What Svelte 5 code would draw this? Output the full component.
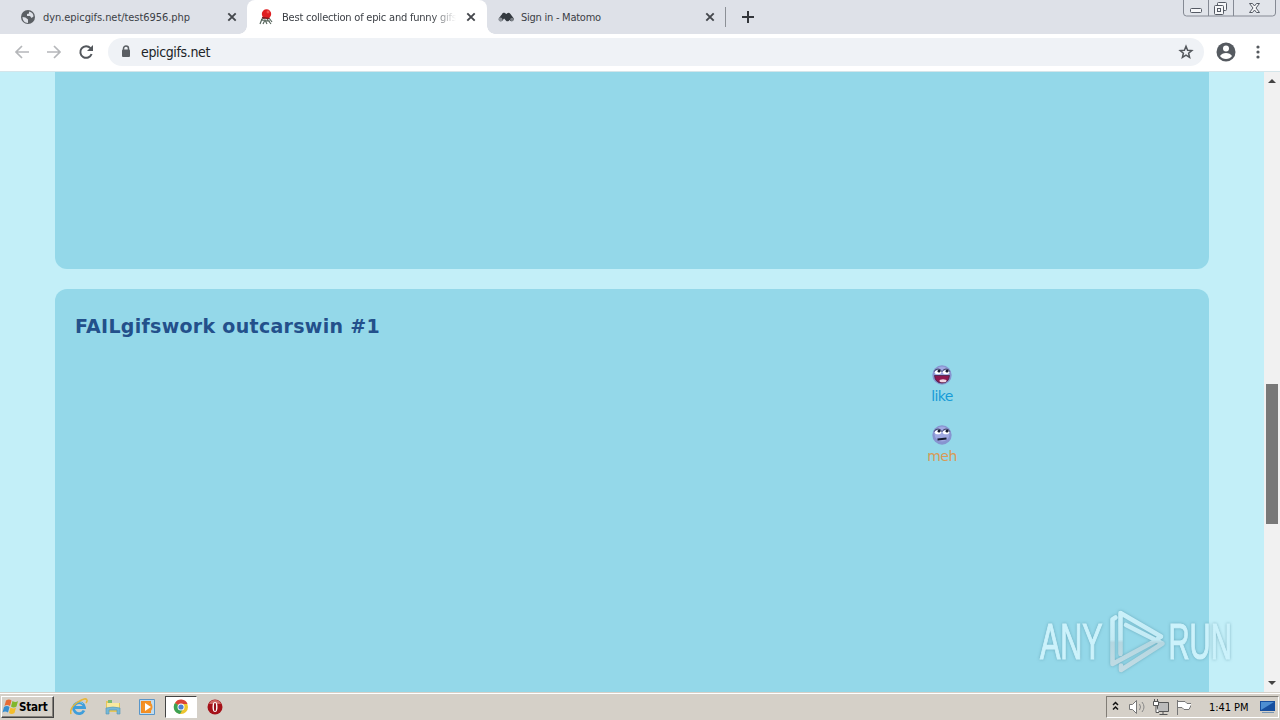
<script>
  const tabs = [
    { title: 'dyn.epicgifs.net/test6956.php', icon: 'globe' },
    { title: 'Best collection of epic and funny gifs', icon: 'epic', active: true },
    { title: 'Sign in - Matomo', icon: 'matomo' },
  ];

  const votes = [
    { label: 'like', mood: 'happy' },
    { label: 'meh', mood: 'meh' },
  ];

  const address = 'epicgifs.net';
  const postTitle = 'FAILgifswork outcarswin #1';
  const clock = '1:41 PM';
</script>

<div class="screen">
  <header class="tabstrip">
    {#each tabs as tab}
      <div class="tab {tab.icon}" class:active={tab.active}>
        <svg class="favicon" width="16" height="16" viewBox="0 0 16 16">
          {#if tab.icon === 'globe'}
            <circle cx="8" cy="8" r="7" fill="#5b5f64" />
            <path d="M2.500 8l3 .5 2.500 2v3.500c-3.500 0-5.500-3-5.500-6zM9 2.500c3 .5 4.500 2.500 4.500 5l-2 1.500-1.500-2H7V5l2-.5z" fill="#dee1e8" />
          {:else if tab.icon === 'epic'}
            <path d="M2 15l2-5 3-1M5 15l2-4 2 4M9 10l4 5M11 9l3 4M3 11l9 1" fill="none" stroke="#57665d" stroke-width="1.2" />
            <circle cx="8.500" cy="5" r="4.700" fill="#df2023" />
            <circle cx="10" cy="3" r="1.400" fill="#f0524e" />
            <path d="M4 8.500l7 1" stroke="#801f24" stroke-width="1.500" />
          {:else}
            <path d="M3 10L6 6M6 6l3.500 4M10.500 6l3 4" stroke="#343a40" stroke-width="4.400" stroke-linecap="round" />
            <circle cx="2.500" cy="10.500" r="2" fill="#8d9299" />
            <circle cx="14" cy="10.500" r="1.800" fill="#7b8087" />
          {/if}
        </svg>
        <span class="tab-title">{tab.title}</span>
        <svg class="close" width="10" height="10" viewBox="0 0 10 10">
          <path d="M1.300 1.300l7.400 7.400M8.700 1.300L1.300 8.700" stroke="#44474c" stroke-width="1.900" />
        </svg>
      </div>
    {/each}
    <svg class="new-tab" width="12" height="12" viewBox="0 0 12 12">
      <path d="M6 0v12M0 6h12" stroke="#33363b" stroke-width="2" />
    </svg>
    <svg class="window-buttons" width="94" height="18" viewBox="0 0 94 18">
      <path d="M.5 0v13q0 3 3 3h86q3 0 3-3V0M25.500 0v16M50.500 0v16" fill="#e1e4ea" stroke="#858a94" />
      <g fill="#f6f7f9" stroke="#555a64">
        <rect x="7.500" y="8.500" width="11" height="4" rx="1" />
        <rect x="34.500" y="2.500" width="9" height="8" rx="1" />
        <rect x="31.500" y="5.500" width="9" height="9" rx="1" />
        <rect x="34.500" y="8.500" width="3" height="3" />
        <path d="M66.500 3.500h3l2 2.500 2-2.500h3l-3.500 4.500 3.500 4.500h-3l-2-2.500-2 2.500h-3l3.500-4.500z" />
      </g>
    </svg>
  </header>

  <div class="toolbar">
    <svg class="nav" width="92" height="16" viewBox="0 0 92 16" fill="none">
      <path d="M15 8H2M8 2L2 8l6 6M33 8h13M40 2l6 6-6 6" stroke="#b5b7ba" stroke-width="1.700" />
      <path d="M76.500 4.200A5.800 5.800 0 1 0 77.600 10" stroke="#53575c" stroke-width="2" />
      <path d="M79 1v6h-6z" fill="#53575c" />
    </svg>
    <div class="omnibox">
      <svg width="10" height="13" viewBox="0 0 10 13">
        <path d="M2.500 6V3.500a2.500 2.500 0 0 1 5 0V6" fill="none" stroke="#5a5e63" stroke-width="1.500" />
        <rect x="1" y="4.500" width="8" height="7.500" rx="1" fill="#5a5e63" />
      </svg>
      <span class="address">{address}</span>
      <svg class="star" width="16" height="16" viewBox="0 0 16 16">
        <path d="M8 2.200l1.600 4 4.200.3-3.200 2.700 1 4.200L8 11.200l-3.600 2.200 1-4.200-3.200-2.700 4.200-.3z" fill="none" stroke="#53575c" stroke-width="1.500" />
      </svg>
    </div>
    <svg class="profile" width="20" height="20" viewBox="0 0 20 20">
      <circle cx="10" cy="10" r="9.500" fill="#555a60" />
      <circle cx="10" cy="6.500" r="3" fill="#fff" />
      <path d="M4 14q2-3 6-3t6 3q-2 3-6 3t-6-3z" fill="#fff" />
    </svg>
    <svg class="menu" width="4" height="14" viewBox="0 0 4 14" fill="#55595e">
      <circle cx="2" cy="2" r="1.600" /><circle cx="2" cy="7" r="1.600" /><circle cx="2" cy="12" r="1.600" />
    </svg>
  </div>

  <div class="viewport">
    <main>
      <article class="previous"></article>
      <article class="post">
        <h2>{postTitle}</h2>
        <div class="votes">
          {#each votes as vote}
            <div class="vote {vote.mood}">
              <svg width="20" height="20" viewBox="0 0 20 20">
                <circle cx="10" cy="10" r="9.700" fill="#8794d0" />
                <circle cx="10" cy="9" r="7.500" fill="#a0a9e2" />
                <ellipse cx="6" cy="7.200" rx="3.200" ry="2" fill="#fff" />
                <ellipse cx="14" cy="7.200" rx="3.200" ry="2" fill="#fff" />
                <path d="M2.400 6.500q.6-2.500 3.600-2.500T9.500 6.500M10.500 6.500q.5-2.500 3.500-2.500T17.600 6.500" fill="none" stroke="#333754" stroke-width=".9" />
                <circle cx="7" cy="6.200" r="1.400" fill="#171a30" />
                <circle cx="15" cy="6.200" r="1.400" fill="#171a30" />
                {#if vote.mood === 'happy'}
                  <path d="M2.500 10.500h15q-.7 7.500-7.500 7.500t-7.500-7.500z" fill="#8f174f" stroke="#3a1739" stroke-width=".7" />
                  <ellipse cx="11" cy="15.800" rx="3.500" ry="1.500" fill="#f0d5e2" />
                {:else}
                  <path d="M5.500 14.500l9-1" stroke="#171a30" stroke-width="1.900" />
                {/if}
              </svg>
              <span>{vote.label}</span>
            </div>
          {/each}
        </div>
      </article>
    </main>
    <div class="scrollbar">
      <svg width="16" height="16" viewBox="0 0 16 16"><path d="M4 11l4-4 4 4z" fill="#444" /></svg>
      <div class="thumb"></div>
      <svg width="16" height="16" viewBox="0 0 16 16"><path d="M4 5l4 4 4-4z" fill="#444" /></svg>
    </div>
    <svg class="watermark" width="204" height="70" viewBox="0 0 204 70">
      <linearGradient id="shine" gradientUnits="userSpaceOnUse" x1="0" y1="0" x2="0" y2="70">
        <stop offset="0" stop-color="#ccf2fb" />
        <stop offset=".48" stop-color="#c3eaf4" />
        <stop offset=".52" stop-color="#b5d7e1" />
        <stop offset="1" stop-color="#c4dce4" />
      </linearGradient>
      <g fill="url(#shine)" stroke="url(#shine)" stroke-width="1.200" font-family="Liberation Sans, sans-serif" font-size="50">
        <text transform="translate(5 53) scale(.61 1)">ANY</text>
        <text transform="translate(133.500 53) scale(.585 1)">RUN</text>
      </g>
      <g fill="none" stroke="url(#shine)" stroke-width="4.600" stroke-linecap="round" stroke-linejoin="round">
        <path d="M85.500 48V7L126 30.500l-3 2" />
        <path d="M80.500 11.500l-3 2V58L121 34.500" />
        <path d="M86 59.500V64l41.500-26.500L91 19" />
      </g>
    </svg>
  </div>

  <footer class="taskbar">
    <div class="start">
      <svg width="17" height="16" viewBox="0 0 17 16">
        <path d="M4 1.500q3-2 5.500 0L8 7Q5 5 2.500 7z" fill="#e76b35" />
        <path d="M10.500 2q3 2 5.500 0l-1.500 5.500q-3 2-5.500 0z" fill="#81b72d" />
        <path d="M2 8q3-2 5.500 0L6 13.500Q3 11.500.5 13.500z" fill="#368ed0" />
        <path d="M8.500 8.500q3 2 5.500 0L12.500 14q-3 2-5.500 0z" fill="#f4bd2c" />
      </svg>
      <span>Start</span>
    </div>
    <div class="quick">
      <svg width="18" height="18" viewBox="0 0 18 18" fill="none">
        <path d="M14 12.500A5.500 5.500 0 1 1 14.500 9.500H5" stroke="#3f9edb" stroke-width="2.800" />
        <path d="M4.500 6.500A5 5 0 0 1 13 6" stroke="#81caf0" stroke-width="1" />
        <path d="M1 16Q-1 10 8 4q8-5 9-2 .5 1-1 3" stroke="#e7b637" stroke-width="1.500" />
      </svg>
      <svg width="18" height="18" viewBox="0 0 18 18">
        <path d="M2 3h5l1 2h8v9H2z" fill="#e5c65b" />
        <path d="M3 5h12v7H3z" fill="#f9e99f" />
        <path d="M4 2h4v3H4z" fill="#7cbb73" />
        <path d="M2 10q7-2 14 0v6h-3v-4H5v4H2z" fill="#76b8d8" stroke="#5294b6" stroke-width=".6" />
      </svg>
      <svg width="18" height="18" viewBox="0 0 18 18">
        <path d="M1.500 1.500h15v15h-15z" fill="#c3dced" stroke="#5996c9" />
        <path d="M3 3h10v12H3z" fill="#f18b22" />
        <circle cx="9" cy="9" r="5.500" fill="#f49226" />
        <path d="M7 5l6 4-6 4z" fill="#fff" />
      </svg>
      <div class="running">
        <svg width="16" height="16" viewBox="0 0 16 16">
          <circle cx="8" cy="8" r="7" fill="#edc52e" />
          <path d="M8 8L2 4a7 7 0 0 1 12.500 1H8z" fill="#d94437" />
          <path d="M2 4a7 7 0 0 0 5 11l3.500-6L8 8z" fill="#3da153" />
          <circle cx="8" cy="8" r="3.500" fill="#fff" />
          <circle cx="8" cy="8" r="2.600" fill="#4b80d3" />
        </svg>
      </div>
      <svg width="18" height="18" viewBox="0 0 18 18">
        <circle cx="9" cy="9" r="7.500" fill="#a51119" />
        <path d="M3 6a6.500 6.500 0 0 1 12 0z" fill="#cf6865" />
        <ellipse cx="9" cy="9" rx="2.500" ry="5" fill="#fff" />
        <ellipse cx="9" cy="9" rx="1.100" ry="4.200" fill="#95101a" />
      </svg>
    </div>
    <div class="tray">
      <svg width="84" height="20" viewBox="0 0 84 20" fill="none">
        <path d="M6 8l2.500-2.500L11 8M6 12.500L8.500 10l2.500 2.500" stroke="#111" stroke-width="1.500" />
        <path d="M22.500 7.500h3l4-4v13l-4-4h-3z" fill="#fff" stroke="#777" />
        <path d="M32.500 7q2 3 0 6M35 5q4 5 0 10" stroke="#888" />
        <path d="M50.500 5.500h11v9h-11zM52.500 17.500h8M56 15v2" fill="#bbb" stroke="#555" />
        <path d="M46.500 4.500h5v4h-5zM47.500 2v3M50.500 2v3M49 9v6.500h3" fill="#fff" stroke="#555" />
        <path d="M70.500 3v15M71 4.500h7l2 2h5l-3 6h-5l-2-2h-4" fill="#fff" stroke="#777" />
      </svg>
      <span class="clock">{clock}</span>
      <svg class="desktop" width="17" height="16" viewBox="0 0 17 16">
        <path d="M1 2h15v10H1z" fill="#174f9f" /><path d="M2 3h13L2 11z" fill="#4d8ed2" />
        <path d="M3 13h12v1H3z" fill="#7895b2" />
      </svg>
    </div>
  </footer>
</div>

<style>
  :global(body) {
    margin: 0;
    overflow: hidden;
  }

  .screen {
    width: 1280px;
    height: 720px;
    display: flex;
    flex-direction: column;
    font-family: 'DejaVu Sans Condensed', 'DejaVu Sans', sans-serif;
  }

  svg {
    display: block;
    flex: none;
  }

  .tabstrip {
    display: flex;
    align-items: center;
    height: 34px;
    background: #dee1e8;
  }

  .tab {
    position: relative;
    display: flex;
    align-items: center;
    box-sizing: border-box;
    width: 239px;
    height: 34px;
    padding: 0 11px 0 11px;
    font-size: 11px;
    letter-spacing: -0.25px;
    color: #3c4046;
  }

  .tab.globe {
    width: 247px;
    padding: 0 10px 0 20px;
    letter-spacing: -0.06px;
  }

  .tab.active {
    width: 240px;
    background: #fff;
    border-radius: 8px 8px 0 0;
    letter-spacing: -0.21px;
  }

  .tab.active::before,
  .tab.active::after {
    content: '';
    position: absolute;
    bottom: 0;
    width: 8px;
    height: 8px;
  }

  .tab.active::before {
    left: -8px;
    background: radial-gradient(circle at 0 0, #dee1e8 7.5px, #fff 8px);
  }

  .tab.active::after {
    right: -8px;
    background: radial-gradient(circle at 100% 0, #dee1e8 7.5px, #fff 8px);
  }

  .tab.matomo::after {
    content: '';
    position: absolute;
    right: 0;
    top: 7px;
    width: 1px;
    height: 20px;
    background: #8c9096;
  }

  .tab-title {
    flex: 1;
    margin: 0 10px 0 7px;
    overflow: hidden;
    white-space: nowrap;
  }

  .active .tab-title {
    margin-left: 8px;
    mask-image: linear-gradient(to right, #000 86%, transparent);
  }

  .new-tab {
    margin-left: 16px;
  }

  .window-buttons {
    align-self: flex-start;
    margin-left: auto;
    margin-right: 3px;
  }

  .toolbar {
    display: flex;
    align-items: center;
    box-sizing: border-box;
    height: 38px;
    padding: 0 20px 2px 14px;
    background: #fff;
    border-bottom: 1px solid #d4e5ea;
  }

  .omnibox {
    display: flex;
    align-items: center;
    box-sizing: border-box;
    width: 1096px;
    height: 28px;
    margin-left: 2px;
    padding: 0 10px 0 13px;
    border-radius: 14px;
    background: #eff2f6;
  }

  .address {
    margin-left: 10px;
    font-size: 14px;
    letter-spacing: -0.36px;
    color: #202327;
  }

  .star {
    margin-left: auto;
  }

  .profile {
    margin-left: 12px;
  }

  .menu {
    margin-left: auto;
  }

  .viewport {
    position: relative;
    display: flex;
    height: 620px;
  }

  main {
    display: flex;
    flex-direction: column;
    gap: 20px;
    box-sizing: border-box;
    width: 1264px;
    padding: 0 55px;
    overflow: hidden;
    background: #c3eff8;
  }

  article {
    background: #94d8e9;
  }

  .previous {
    height: 197px;
    border-radius: 0 0 12px 12px;
  }

  .post {
    flex: 1;
    padding: 0 20px;
    border-radius: 12px 12px 0 0;
  }

  h2 {
    margin: 24px 0 0;
    font: bold 19px/26px 'DejaVu Sans', sans-serif;
    letter-spacing: 0.29px;
    color: #23508b;
    white-space: nowrap;
  }

  .votes {
    display: flex;
    flex-direction: column;
    gap: 19px;
    width: 60px;
    margin: 26px 0 0 837px;
  }

  .vote {
    display: flex;
    flex-direction: column;
    align-items: center;
    height: 41px;
    font: 14px/22px 'DejaVu Sans', sans-serif;
    letter-spacing: -0.6px;
  }

  .happy {
    color: #169bd7;
  }

  .meh {
    color: #d99a55;
  }

  .scrollbar {
    display: flex;
    flex-direction: column;
    justify-content: space-between;
    width: 16px;
    background: #f1f1f1;
  }

  .thumb {
    width: 12px;
    height: 140px;
    margin: 296px 2px auto;
    background: #787878;
  }

  .watermark {
    position: absolute;
    left: 1035px;
    top: 534px;
    filter: drop-shadow(0 0 1.5px rgba(65, 125, 145, 0.5));
  }

  .taskbar {
    display: flex;
    align-items: center;
    box-sizing: border-box;
    height: 28px;
    padding: 1px 0 0 1px;
    background: #d5d0c8;
    border-top: 1px solid #d5d0c8;
    box-shadow: inset 0 1px #fff;
  }

  .start {
    display: flex;
    align-items: center;
    box-sizing: border-box;
    width: 53px;
    height: 22px;
    border: 1px solid;
    border-color: #fff #444 #444 #fff;
    box-shadow: inset -1px -1px #85817b;
    font-size: 11.5px;
    font-weight: bold;
    letter-spacing: -0.2px;
    color: #000;
  }

  .quick {
    display: flex;
    align-items: center;
    gap: 16px;
    margin-left: 16px;
  }

  .running {
    display: flex;
    align-items: center;
    justify-content: center;
    box-sizing: border-box;
    width: 32px;
    height: 22px;
    margin: 0 -7px;
    border: 1px solid;
    border-color: #444 #fff #fff #444;
    background: #fff;
  }

  .tray {
    display: flex;
    align-items: center;
    box-sizing: border-box;
    width: 173px;
    height: 22px;
    margin-left: auto;
    margin-right: 1px;
    border: 1px solid;
    border-color: #817d76 #fff #fff #817d76;
  }

  .clock {
    margin-left: 18px;
    font-size: 11px;
    letter-spacing: -0.05px;
    white-space: nowrap;
    color: #000;
  }

  .desktop {
    margin-left: auto;
    margin-right: 2px;
  }
</style>
